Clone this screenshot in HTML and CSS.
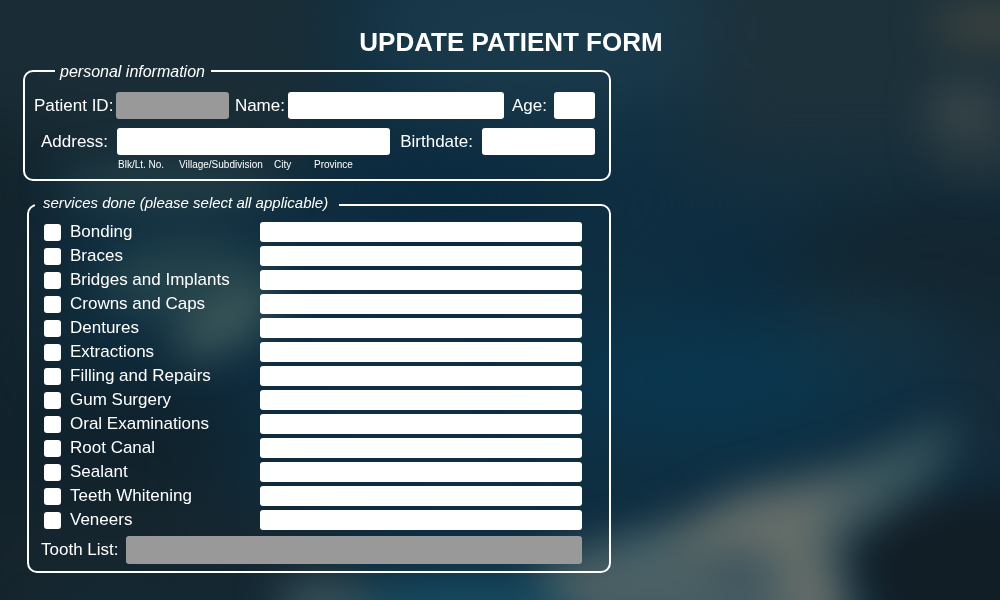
FILE: index.html
```
<!DOCTYPE html>
<html lang="en">
<head>
<meta charset="utf-8">
<meta name="viewport" content="width=device-width, initial-scale=1">
<title>Update Patient Form</title>
<link rel="stylesheet" href="styles.css">
</head>
<body>
<svg class="backdrop" viewBox="0 0 1000 600" preserveAspectRatio="none" aria-hidden="true">
  <defs>
    <filter id="soft" x="-100%" y="-100%" width="300%" height="300%" color-interpolation-filters="sRGB"><feGaussianBlur stdDeviation="20"/></filter>
    <filter id="wide" x="-100%" y="-100%" width="300%" height="300%" color-interpolation-filters="sRGB"><feGaussianBlur stdDeviation="38"/></filter>
  </defs>
  <rect width="1000" height="600" fill="#0f2e41"/>
  <g filter="url(#wide)">
    <rect x="-100" y="-100" width="430" height="270" fill="#1a2d36"/>
    <rect x="-100" y="120" width="150" height="600" fill="#13232b"/>
    <ellipse cx="550" cy="30" rx="190" ry="90" fill="#1a3a4b"/>
    <rect x="700" y="-100" width="400" height="270" fill="#1d313b"/>
    <ellipse cx="960" cy="260" rx="170" ry="65" fill="#13252f"/>
    <ellipse cx="450" cy="200" rx="130" ry="50" fill="#0a2a40"/>
    <ellipse cx="740" cy="280" rx="60" ry="40" fill="#0c2a3e"/>
    <ellipse cx="700" cy="380" rx="150" ry="60" fill="#0a374f"/>
    <ellipse cx="870" cy="330" rx="80" ry="30" fill="#173646"/>
    <rect x="970" y="320" width="130" height="160" fill="#182a37"/>
    <ellipse cx="110" cy="440" rx="140" ry="70" fill="#10222c"/>
    <ellipse cx="170" cy="560" rx="190" ry="60" fill="#17262e"/>
  </g>
  <g filter="url(#soft)">
    <ellipse cx="170" cy="185" rx="110" ry="22" fill="#284247" opacity=".8"/>
    <ellipse cx="190" cy="280" rx="90" ry="40" fill="#2b494e" opacity=".75"/>
    <ellipse cx="225" cy="325" rx="55" ry="22" fill="#4a6463" opacity=".8" transform="rotate(-28 225 325)"/>
    <ellipse cx="990" cy="25" rx="60" ry="24" fill="#42463f" opacity=".8"/>
    <ellipse cx="965" cy="110" rx="40" ry="26" fill="#414b4c" opacity=".8"/>
    <ellipse cx="980" cy="150" rx="50" ry="25" fill="#2c3b40" opacity=".8"/>
    <ellipse cx="470" cy="610" rx="130" ry="34" fill="#174a60"/>
    <ellipse cx="325" cy="602" rx="50" ry="20" fill="#405a60"/>
    <path d="M530 560L600 545L680 520L740 490L850 465L960 420L930 480L840 540L850 640L590 640Z" fill="#4a5f63"/>
    <path d="M880 465L960 430L930 470L860 500Z" fill="#2a5058" opacity=".8"/>
    <path d="M660 545L750 500L840 490L810 550L840 580L850 640L790 640L780 560Z" fill="#74766d" opacity=".65"/>
    <ellipse cx="635" cy="550" rx="35" ry="12" fill="#4b6c7a" opacity=".6"/>
    <ellipse cx="740" cy="568" rx="34" ry="18" fill="#334d59" opacity=".8"/>
    <path d="M850 550L920 500L1060 480L1060 660L900 660Z" fill="#121e26"/>
  </g>
</svg>

<main class="page">
  <h1 class="title">UPDATE PATIENT FORM</h1>
  <form class="form">
    <fieldset class="panel personal">
      <legend class="legend">personal information</legend>
      <div class="row">
        <label for="pid">Patient ID:</label>
        <input class="field id" id="pid" type="text" readonly>
        <label for="name">Name:</label>
        <input class="field name" id="name" type="text">
        <label for="age">Age:</label>
        <input class="field age" id="age" type="text">
      </div>
      <div class="row address-row">
        <label for="address">Address:</label>
        <input class="field address" id="address" type="text" aria-describedby="address-parts">
        <label for="birthdate">Birthdate:</label>
        <input class="field birthdate" id="birthdate" type="text">
      </div>
      <div class="hints" id="address-parts">
        <span>Blk/Lt. No.</span>
        <span>Village/Subdivision</span>
        <span>City</span>
        <span>Province</span>
      </div>
    </fieldset>

    <fieldset class="panel services">
      <legend class="legend">services done (please select all applicable)</legend>
      <ul class="list">
        <li class="service"><input class="tick" type="checkbox" id="s1"><label for="s1">Bonding</label><input class="note" type="text" aria-label="Bonding notes"></li>
        <li class="service"><input class="tick" type="checkbox" id="s2"><label for="s2">Braces</label><input class="note" type="text" aria-label="Braces notes"></li>
        <li class="service"><input class="tick" type="checkbox" id="s3"><label for="s3">Bridges and Implants</label><input class="note" type="text" aria-label="Bridges and Implants notes"></li>
        <li class="service"><input class="tick" type="checkbox" id="s4"><label for="s4">Crowns and Caps</label><input class="note" type="text" aria-label="Crowns and Caps notes"></li>
        <li class="service"><input class="tick" type="checkbox" id="s5"><label for="s5">Dentures</label><input class="note" type="text" aria-label="Dentures notes"></li>
        <li class="service"><input class="tick" type="checkbox" id="s6"><label for="s6">Extractions</label><input class="note" type="text" aria-label="Extractions notes"></li>
        <li class="service"><input class="tick" type="checkbox" id="s7"><label for="s7">Filling and Repairs</label><input class="note" type="text" aria-label="Filling and Repairs notes"></li>
        <li class="service"><input class="tick" type="checkbox" id="s8"><label for="s8">Gum Surgery</label><input class="note" type="text" aria-label="Gum Surgery notes"></li>
        <li class="service"><input class="tick" type="checkbox" id="s9"><label for="s9">Oral Examinations</label><input class="note" type="text" aria-label="Oral Examinations notes"></li>
        <li class="service"><input class="tick" type="checkbox" id="s10"><label for="s10">Root Canal</label><input class="note" type="text" aria-label="Root Canal notes"></li>
        <li class="service"><input class="tick" type="checkbox" id="s11"><label for="s11">Sealant</label><input class="note" type="text" aria-label="Sealant notes"></li>
        <li class="service"><input class="tick" type="checkbox" id="s12"><label for="s12">Teeth Whitening</label><input class="note" type="text" aria-label="Teeth Whitening notes"></li>
        <li class="service"><input class="tick" type="checkbox" id="s13"><label for="s13">Veneers</label><input class="note" type="text" aria-label="Veneers notes"></li>
      </ul>
      <div class="tooth">
        <label for="teeth">Tooth List:</label>
        <input class="field teeth" id="teeth" type="text" readonly>
      </div>
    </fieldset>
  </form>
</main>
</body>
</html>
```
FILE: styles.css
```
* {
  box-sizing: border-box;
}

body {
  margin: 0;
  background: #0f2e41;
  color: #fff;
  font-family: "Liberation Sans", Arial, sans-serif;
  font-size: 17px;
  line-height: 20px;
}

.backdrop {
  position: fixed;
  inset: 0;
  z-index: -1;
  width: 100%;
  height: 100%;
}

.page {
  padding-top: 27px;
}

.title {
  margin: 0 0 3px;
  padding-left: 22px;
  font-size: 26px;
  line-height: 30px;
  text-align: center;
}

.form {
  width: 61%;
  min-width: 560px;
  margin-left: 1px;
  padding-left: 22px;
}

.panel {
  min-width: 0;
  margin: 0;
  border: 2px solid #fff;
  border-radius: 10px;
}

.legend {
  font-style: italic;
}

.personal {
  padding: 10px 14px 8px 9px;
}

.personal .legend {
  margin-left: 21px;
  padding: 2px 6px 0 5px;
  font-size: 16px;
}

.row {
  display: flex;
  align-items: center;
}

.address-row {
  margin-top: 9px;
  padding-left: 7px;
}

.field,
.note {
  min-width: 0;
  border: 0;
  border-radius: 3px;
  padding: 0 6px;
  background: #fff;
  color: #222;
  font: inherit;
  font-size: 15px;
}

.field {
  height: 27px;
}

.field:read-only {
  background: #999;
}

.id {
  flex: 1 1 112px;
  margin: 0 6px 0 3px;
}

.name {
  flex: 2 1 215px;
  margin: 0 8px 0 3px;
}

.age {
  flex: 0 1 41px;
  margin-left: 7px;
}

.address {
  flex: 2 1 273px;
  margin: 0 10px 0 9px;
}

.birthdate {
  flex: 1 1 113px;
  margin-left: 9px;
}

.hints {
  display: grid;
  grid-template-columns: 61px 95px 40px auto;
  padding: 4px 0 0 84px;
  font-size: 10px;
  line-height: 12px;
}

.services {
  margin: 12px 0 0 4px;
  padding: 3px 27px 7px 12px;
}

.services .legend {
  margin-left: -6px;
  padding: 0 11px 4px 8px;
  font-size: 15px;
}

.list {
  margin: 0;
  padding: 0 0 0 3px;
  list-style: none;
}

.service {
  display: grid;
  grid-template-columns: 17px 181px 1fr;
  column-gap: 9px;
  align-items: center;
  height: 24px;
}

.tick {
  appearance: none;
  width: 17px;
  height: 17px;
  margin: 0;
  border-radius: 3px;
  background: #fff;
}

.tick:checked {
  background: #2f8fc4;
  box-shadow: inset 0 0 0 3px #fff;
}

.note {
  width: 100%;
  height: 20px;
}

.tooth {
  display: flex;
  align-items: center;
  gap: 7px;
  margin-top: 4px;
}

.teeth {
  flex: 1;
  height: 28px;
}
```
